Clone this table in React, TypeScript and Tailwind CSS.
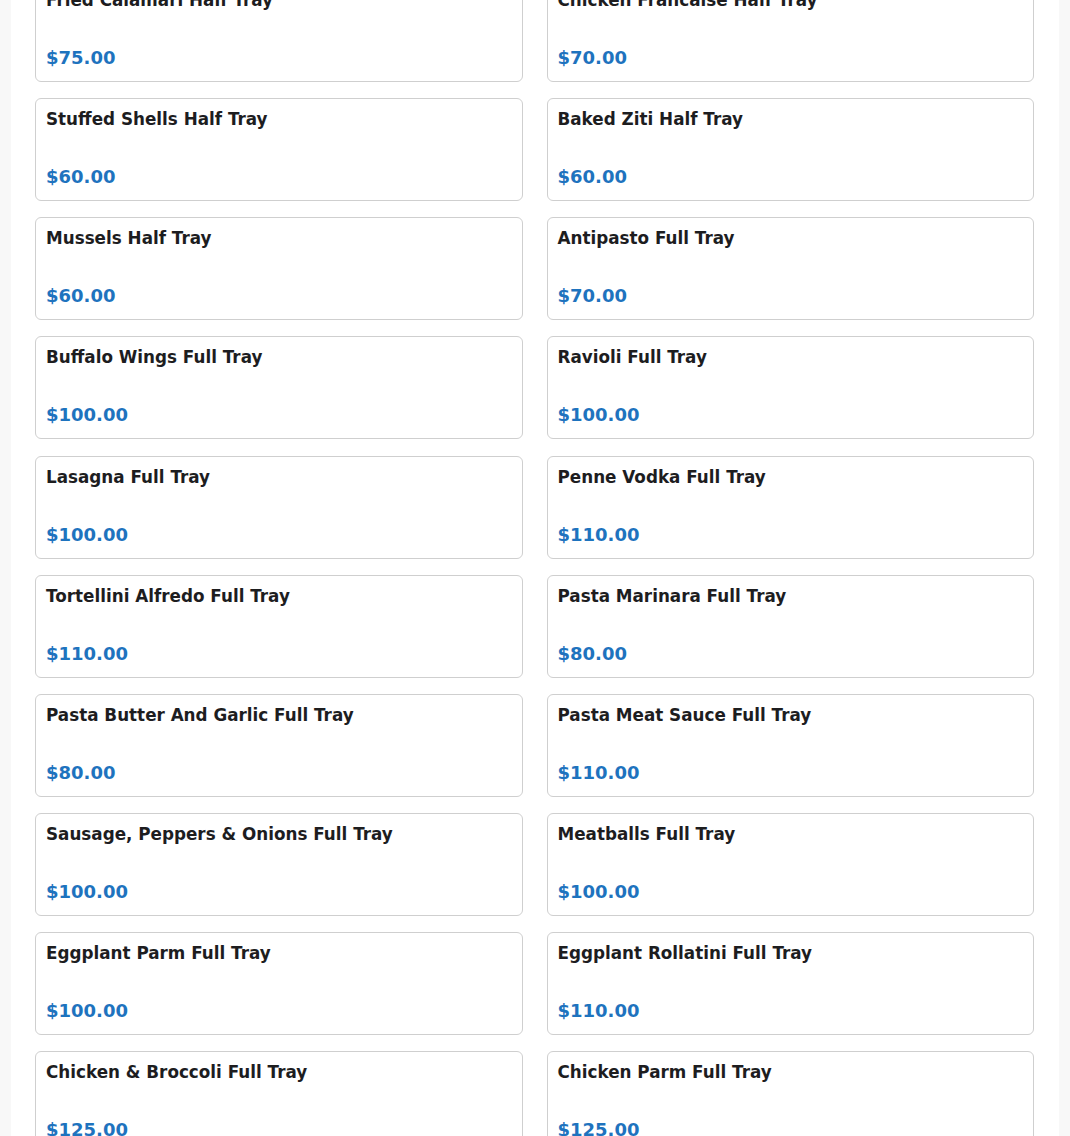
const items: [string, string][] = [
  ["Fried Calamari Half Tray", "$75.00"],
  ["Chicken Francaise Half Tray", "$70.00"],
  ["Stuffed Shells Half Tray", "$60.00"],
  ["Baked Ziti Half Tray", "$60.00"],
  ["Mussels Half Tray", "$60.00"],
  ["Antipasto Full Tray", "$70.00"],
  ["Buffalo Wings Full Tray", "$100.00"],
  ["Ravioli Full Tray", "$100.00"],
  ["Lasagna Full Tray", "$100.00"],
  ["Penne Vodka Full Tray", "$110.00"],
  ["Tortellini Alfredo Full Tray", "$110.00"],
  ["Pasta Marinara Full Tray", "$80.00"],
  ["Pasta Butter And Garlic Full Tray", "$80.00"],
  ["Pasta Meat Sauce Full Tray", "$110.00"],
  ["Sausage, Peppers & Onions Full Tray", "$100.00"],
  ["Meatballs Full Tray", "$100.00"],
  ["Eggplant Parm Full Tray", "$100.00"],
  ["Eggplant Rollatini Full Tray", "$110.00"],
  ["Chicken & Broccoli Full Tray", "$125.00"],
  ["Chicken Parm Full Tray", "$125.00"],
];

export default function App() {
  return (
    <div
      className="h-[1136px] overflow-hidden bg-[#f8f8f8] px-[11px]"
      style={{ fontFamily: '"DejaVu Sans", sans-serif' }}
    >
      <div className="flex h-full flex-col overflow-hidden bg-white pl-[24px] pr-[25px]">
        <div className="mt-[-21px] grid grid-cols-2 gap-x-[24px] gap-y-[16.15px]">
          {items.map(([name, price]) => (
            <div
              key={name}
              className="flex h-[103px] flex-col rounded-[6px] border border-[#cfcfcf] bg-white px-[10px] pt-[10px]"
            >
              <div className="text-[16.8px] font-bold leading-[21px] text-[#1d1d1f]">{name}</div>
              <div className="mt-[36px] text-[18px] font-bold leading-[21px] text-[#1e73be]">{price}</div>
            </div>
          ))}
        </div>
      </div>
    </div>
  );
}
